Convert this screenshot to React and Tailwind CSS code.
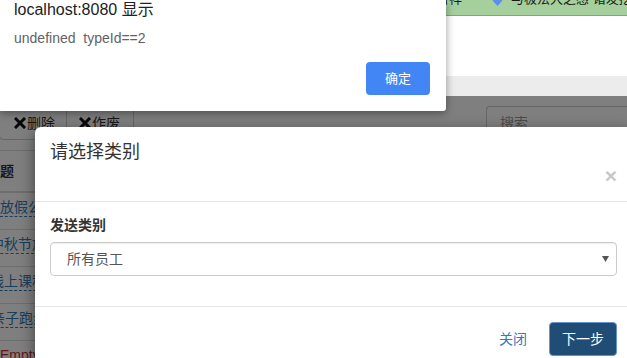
const rows = [
  { text: "放假公告", shift: "ml-[0px]", color: "text-[#337ab7] border-[#337ab7]" },
  { text: "中秋节放假", shift: "ml-[-10px]", color: "text-[#337ab7] border-[#337ab7]" },
  { text: "线上课程", shift: "ml-[-10px]", color: "text-[#337ab7] border-[#337ab7]" },
  { text: "亲子跑步", shift: "ml-[-9px]", color: "text-[#337ab7] border-[#337ab7]" },
  { text: "Empty", shift: "ml-[0px]", color: "text-[#c9302c] border-transparent" },
];

const CrossIcon = () => (
  <svg width="12" height="12" viewBox="0 0 12 12" className="shrink-0">
    <path d="M2 2 L10 10 M10 2 L2 10" stroke="#111" strokeWidth="3" strokeLinecap="square" />
  </svg>
);

const App = () => {
  return (
    <div className="relative w-[627px] h-[358px] overflow-hidden bg-white font-['Liberation_Sans','Noto_Sans_CJK_SC',sans-serif]">
      {/* browser bars */}
      <div className="h-[16px] bg-[#a5cf9d] border-b border-[#7ea877] overflow-hidden">
        <div className="flex items-center gap-[30px] pl-[436px] -mt-[9px] text-[13px] leading-[16px] text-[#1a1a1a] whitespace-nowrap">
          <span>日祥</span>
          <span className="flex items-center gap-[8px]">
            <svg width="11" height="13" viewBox="0 0 11 13">
              <path d="M5.5 0 L11 2 L10 8 L5.5 13 L1 8 L0 2 Z" fill="#5b8def" />
            </svg>
            <span>与极法大之感 诸发挖</span>
          </span>
        </div>
      </div>
      <div className="h-[60px] bg-white" />
      <div className="h-[20px] bg-[#ececec]" />

      {/* page under backdrop */}
      <div className="relative h-[262px] bg-white text-[14px] text-[#333]">
        <div className="flex items-start justify-between pt-[10px]">
          <div className="flex -ml-[1px]">
            <div className="flex items-center gap-[1px] h-[34px] w-[68px] pl-[14px] border border-[#ccc] rounded-l-[4px] leading-[20px] whitespace-nowrap">
              <CrossIcon />
              <span>删除</span>
            </div>
            <div className="flex items-center gap-[1px] h-[34px] w-[67px] pl-[12px] border border-l-0 border-[#ccc] rounded-r-[4px] leading-[20px] whitespace-nowrap">
              <CrossIcon />
              <span>作废</span>
            </div>
          </div>
          <div className="w-[141px] h-[34px] border border-r-0 border-[#ccc] rounded-l-[4px] pl-[13px] flex items-center text-[#999] leading-[20px]">
            搜索
          </div>
        </div>

        <div className="mt-[10px] border-t border-[#ddd]">
          <div className="h-[42px] flex items-center border-b-2 border-[#ddd] font-bold">
            <span className="ml-[-14px] leading-[20px]">标题</span>
          </div>
          {rows.map((row) => (
            <div key={row.text} className="h-[37px] border-b border-[#ddd] pt-[4px] whitespace-nowrap">
              <span className={`inline-block ${row.shift} ${row.color} border-b border-dashed leading-[17px]`}>
                {row.text}
              </span>
            </div>
          ))}
        </div>

        <div className="absolute inset-0 bg-black/50" />
      </div>

      {/* bootstrap modal */}
      <div className="absolute left-[35px] top-[127px] w-[597px] h-[260px] bg-white rounded-[6px] shadow-[0_5px_15px_rgba(0,0,0,0.5)] text-[#333]">
        <div className="px-[15px] pt-[15px] pb-[15px] border-b border-[#e5e5e5]">
          <div className="text-[18px] leading-[20px]">请选择类别</div>
          <div className="mt-[4px] flex justify-end leading-[20px]">
            <span className="text-[21px] font-bold text-[#c8c8c8] leading-[20px]">×</span>
          </div>
        </div>
        <div className="px-[15px] pt-[13px] pb-[30px]">
          <div className="text-[14px] font-bold leading-[20px] mb-[7px]">发送类别</div>
          <div className="h-[34px] border border-[#ccc] rounded-[4px] flex items-center justify-between pl-[16px] pr-[7px] text-[14px] text-[#555] shadow-[inset_0_1px_1px_rgba(0,0,0,0.075)]">
            <span className="leading-[20px]">所有员工</span>
            <svg width="7" height="6" viewBox="0 0 7 6">
              <path d="M0 0 L7 0 L3.5 6 Z" fill="#555" />
            </svg>
          </div>
        </div>
        <div className="border-t border-[#e5e5e5] px-[15px] pt-[15px] flex justify-end items-center gap-[10px] text-[14px]">
          <span className="text-[#337ab7] leading-[20px] px-[12px]">关闭</span>
          <div className="h-[34px] w-[68px] flex items-center justify-center rounded-[4px] bg-[#1f4d75] border border-[#6494cc] text-white leading-[20px]">
            下一步
          </div>
        </div>
      </div>

      {/* browser alert */}
      <div className="absolute left-0 top-0 w-[446px] h-[111px] bg-white rounded-br-[3px] shadow-[0_2px_8px_rgba(0,0,0,0.4)]">
        <div className="pl-[14px] text-[16px] leading-[20px] text-[#202124]">localhost:8080 显示</div>
        <div className="pl-[14px] mt-[8px] text-[14px] leading-[20px] text-[#5f6368] whitespace-pre">
          {"undefined  typeId==2"}
        </div>
        <div className="flex justify-end pr-[16px] mt-[14px]">
          <div className="w-[64px] h-[33px] rounded-[4px] bg-[#4285f4] text-white text-[13px] flex items-center justify-center">
            确定
          </div>
        </div>
      </div>
    </div>
  );
};

export default App;
